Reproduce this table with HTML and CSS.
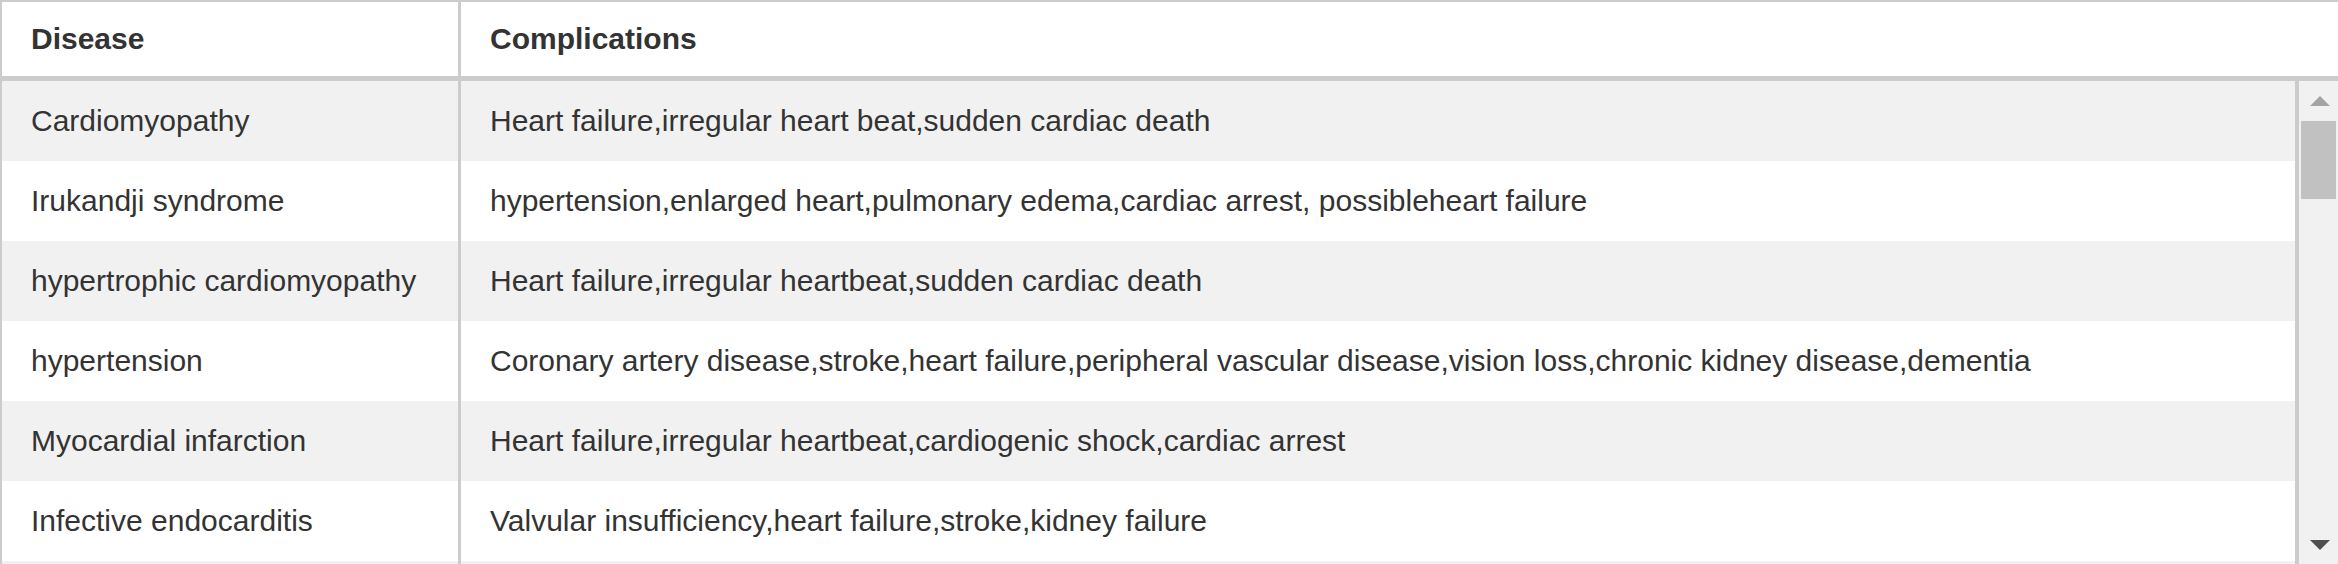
FILE: index.html
```html
<!DOCTYPE html>
<html>
<head>
<meta charset="utf-8">
<link rel="stylesheet" href="styles.css">
</head>
<body>
<div class="grid">
  <div class="head">
    <div class="hcell c1">Disease</div>
    <div class="hcell c2">Complications</div>
  </div>
  <div class="body">
    <div class="rows">
      <div class="row odd"><div class="cell c1">Cardiomyopathy</div><div class="cell c2">Heart failure,irregular heart beat,sudden cardiac death</div></div>
      <div class="row"><div class="cell c1">Irukandji syndrome</div><div class="cell c2">hypertension,enlarged heart,pulmonary edema,cardiac arrest, possibleheart failure</div></div>
      <div class="row odd"><div class="cell c1">hypertrophic cardiomyopathy</div><div class="cell c2">Heart failure,irregular heartbeat,sudden cardiac death</div></div>
      <div class="row"><div class="cell c1">hypertension</div><div class="cell c2">Coronary artery disease,stroke,heart failure,peripheral vascular disease,vision loss,chronic kidney disease,dementia</div></div>
      <div class="row odd"><div class="cell c1">Myocardial infarction</div><div class="cell c2">Heart failure,irregular heartbeat,cardiogenic shock,cardiac arrest</div></div>
      <div class="row"><div class="cell c1">Infective endocarditis</div><div class="cell c2">Valvular insufficiency,heart failure,stroke,kidney failure</div></div>
      <div class="row odd"><div class="cell c1"></div><div class="cell c2"></div></div>
    </div>
    <div class="scrollbar">
      <div class="sb-btn"><svg width="20" height="10" viewBox="0 0 20 10"><polygon points="10,0 20,10 0,10" fill="#a3a3a3"/></svg></div>
      <div class="sb-track"><div class="thumb"></div></div>
      <div class="sb-btn"><svg width="20" height="10" viewBox="0 0 20 10"><polygon points="0,0 20,0 10,10" fill="#505050"/></svg></div>
    </div>
  </div>
</div>
</body>
</html>
```
FILE: styles.css
```css
html, body {
  margin: 0;
  padding: 0;
  background: #fff;
  overflow: hidden;
}
.grid {
  height: 564px;
  display: flex;
  flex-direction: column;
  border-top: 2px solid #cccccc;
  border-left: 2px solid #cccccc;
  box-sizing: border-box;
  font-family: "Liberation Sans", Arial, sans-serif;
  font-size: 30px;
  color: #333333;
  overflow: hidden;
}
.head {
  display: flex;
  height: 74px;
  flex: none;
  border-bottom: 5px solid #cccccc;
  background: #fff;
}
.hcell {
  display: flex;
  align-items: center;
  font-weight: bold;
  padding-left: 29px;
  box-sizing: border-box;
}
.c1 {
  width: 459px;
  flex: none;
  border-right: 3px solid #cccccc;
}
.c2 {
  flex: 1;
}
.body {
  flex: 1;
  display: flex;
  min-height: 0;
}
.rows {
  flex: 1;
  border-right: 4px solid #cccccc;
  overflow: hidden;
}
.row {
  display: flex;
  height: 80px;
  background: #fff;
}
.row.odd {
  background: #f1f1f1;
}
.cell {
  display: flex;
  align-items: center;
  padding-left: 29px;
  box-sizing: border-box;
  white-space: nowrap;
}
.scrollbar {
  width: 39px;
  flex: none;
  display: flex;
  flex-direction: column;
  background: #f1f1f1;
}
.sb-btn {
  height: 39px;
  flex: none;
  display: flex;
  align-items: center;
  justify-content: center;
  padding-left: 2px;
}
.sb-track {
  flex: 1;
  padding-top: 1px;
  padding-left: 2px;
  padding-right: 2px;
}
.thumb {
  height: 78px;
  background: #c1c1c1;
}
```
